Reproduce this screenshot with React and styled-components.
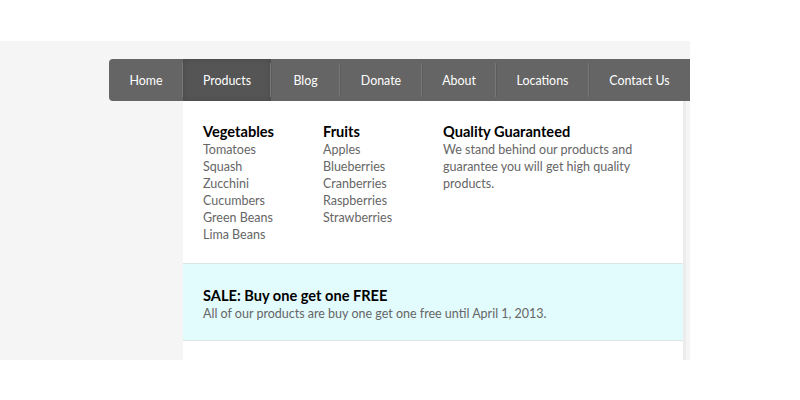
import React from 'react'
import styled, { createGlobalStyle } from 'styled-components'

const GlobalStyle = createGlobalStyle`
  html, body {
    margin: 0;
    padding: 0;
    background: #fff;
    font-family: Lato, "Open Sans", sans-serif;
  }
`

const Page = styled.div`
  padding-top: 41px;
`

const Stage = styled.div`
  width: 690px;
  height: 319px;
  background: #f5f5f5;
  overflow: hidden;
  padding-top: 18px;
  box-sizing: border-box;
`

const Nav = styled.ul`
  display: flex;
  list-style: none;
  margin: 0 0 0 109px;
  padding: 0;
  height: 42px;
  width: 581px;
  background: #656565;
  border-radius: 4px 0 0 4px;
`

const NavItem = styled.li`
  position: relative;
  width: ${(p) => p.w}px;
  display: flex;
  align-items: center;
  justify-content: center;
  color: #fff;
  font-size: 12.4px;
  background: ${(p) => (p.active ? '#555' : 'transparent')};
  box-shadow: ${(p) => (p.active ? 'inset 0 0 6px rgba(0,0,0,0.15)' : 'none')};
  border-radius: ${(p) => (p.first ? '4px 0 0 4px' : '0')};

  &::after {
    content: '';
    display: ${(p) => (p.last ? 'none' : 'block')};
    position: absolute;
    right: 0;
    top: 4px;
    bottom: 4px;
    width: 1px;
    background: #787878;
    box-shadow: 1px 0 0 #5c5c5c;
  }
`

const Panel = styled.div`
  margin-left: 183px;
  width: 500px;
  height: 260px;
  background: #fff;
  box-shadow: 3px 0 0 #ececec;
`

const Columns = styled.div`
  display: flex;
  padding: 22px 20px 20px;
  height: 120px;
`

const Column = styled.div`
  width: ${(p) => p.w}px;
`

const Heading = styled.div`
  font-weight: 700;
  font-size: 14.6px;
  color: #000;
  line-height: 18px;
`

const Item = styled.div`
  font-size: 12.5px;
  color: #666;
  line-height: 17px;
`

const Sale = styled.div`
  background: #e2fbfd;
  border-top: 1px solid #dde4e5;
  border-bottom: 1px solid #dde4e5;
  padding: 23px 20px 19px;
  height: 34px;
`

const vegetables = ['Tomatoes', 'Squash', 'Zucchini', 'Cucumbers', 'Green Beans', 'Lima Beans']
const fruits = ['Apples', 'Blueberries', 'Cranberries', 'Raspberries', 'Strawberries']
const links = [
  { label: 'Home', w: 74 },
  { label: 'Products', w: 88 },
  { label: 'Blog', w: 69 },
  { label: 'Donate', w: 82 },
  { label: 'About', w: 74 },
  { label: 'Locations', w: 93 },
  { label: 'Contact Us', w: 101 },
]

export default function App() {
  return (
    <>
      <GlobalStyle />
      <Page>
        <Stage>
          <Nav>
            {links.map((l, i) => (
              <NavItem
                key={l.label}
                w={l.w}
                active={l.label === 'Products'}
                first={i === 0}
                last={i === links.length - 1}
              >
                {l.label}
              </NavItem>
            ))}
          </Nav>
          <Panel>
            <Columns>
              <Column w={120}>
                <Heading>Vegetables</Heading>
                {vegetables.map((v) => (
                  <Item key={v}>{v}</Item>
                ))}
              </Column>
              <Column w={120}>
                <Heading>Fruits</Heading>
                {fruits.map((f) => (
                  <Item key={f}>{f}</Item>
                ))}
              </Column>
              <Column w={200}>
                <Heading>Quality Guaranteed</Heading>
                <Item>
                  We stand behind our products and guarantee you will get high quality products.
                </Item>
              </Column>
            </Columns>
            <Sale>
              <Heading>SALE: Buy one get one FREE</Heading>
              <Item>All of our products are buy one get one free until April 1, 2013.</Item>
            </Sale>
          </Panel>
        </Stage>
      </Page>
    </>
  )
}
